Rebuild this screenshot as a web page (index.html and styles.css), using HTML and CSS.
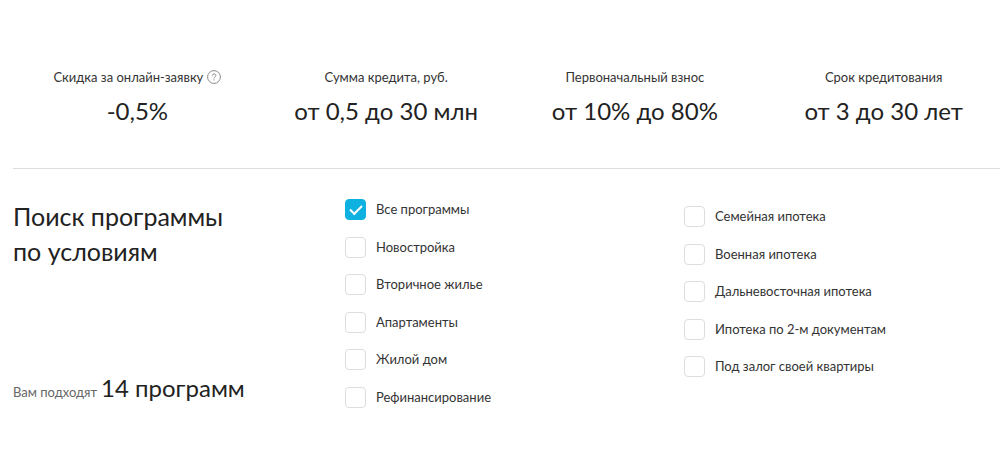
FILE: index.html
```html
<!DOCTYPE html>
<html lang="ru">
<head>
    <meta charset="UTF-8">
    <meta name="viewport" content="width=device-width, initial-scale=1.0">
    <title>Ипотечные программы</title>
    <link rel="stylesheet" href="styles.css">
</head>
<body>
    <!-- Loan terms -->
    <section class="terms">
        <div class="term">
            <div class="term-label">Скидка за онлайн-заявку
                <button class="help" type="button" aria-label="Подробнее">
                    <svg viewBox="0 0 14 14" width="14" height="14" fill="none" stroke="#8a8a8a">
                        <circle cx="7" cy="7" r="6.4"/>
                        <path d="M5.3 5.6C5.3 3.4 8.9 3.4 8.9 5.5C8.9 6.8 7 6.8 7 8.4M7 9.4V10.5"/>
                    </svg>
                </button>
            </div>
            <div class="term-value">-0,5%</div>
        </div>
        <div class="term">
            <div class="term-label">Сумма кредита, руб.</div>
            <div class="term-value">от 0,5 до 30 млн</div>
        </div>
        <div class="term">
            <div class="term-label">Первоначальный взнос</div>
            <div class="term-value">от 10% до 80%</div>
        </div>
        <div class="term">
            <div class="term-label">Срок кредитования</div>
            <div class="term-value">от 3 до 30 лет</div>
        </div>
    </section>

    <!-- Program search -->
    <section class="search">
        <div class="search-info">
            <h2 class="search-title">Поиск программы<br>по условиям</h2>
            <p class="result">Вам подходят <span class="result-count">14 программ</span></p>
        </div>
        <div class="options">
            <label class="option"><input type="checkbox" checked>Все программы</label>
            <label class="option"><input type="checkbox">Новостройка</label>
            <label class="option"><input type="checkbox">Вторичное жилье</label>
            <label class="option"><input type="checkbox">Апартаменты</label>
            <label class="option"><input type="checkbox">Жилой дом</label>
            <label class="option"><input type="checkbox">Рефинансирование</label>
        </div>
        <div class="options options-special">
            <label class="option"><input type="checkbox">Семейная ипотека</label>
            <label class="option"><input type="checkbox">Военная ипотека</label>
            <label class="option"><input type="checkbox">Дальневосточная ипотека</label>
            <label class="option"><input type="checkbox">Ипотека по 2-м документам</label>
            <label class="option"><input type="checkbox">Под залог своей квартиры</label>
        </div>
    </section>
</body>
</html>
```
FILE: styles.css
```css
body {
    margin: 0;
    padding: 66px 0 0 13px;
    font-family: Lato, "Noto Sans", sans-serif;
    font-size: 13px;
    color: #333;
    background: #fff;
}

.terms {
    display: grid;
    grid-template-columns: repeat(4, 1fr);
    column-gap: 16px;
    padding: 0 0 40px 8px;
    border-bottom: 1px solid #ddd;
    text-align: center;
}

.term-label {
    display: flex;
    align-items: center;
    justify-content: center;
    gap: 4px;
    line-height: 22px;
}

.term-value,
.result-count {
    font-size: 24px;
    line-height: 34px;
    color: #222;
}

.term-value {
    margin-top: 6px;
}

.help {
    display: flex;
    padding: 0;
    border: none;
    background: none;
    cursor: pointer;
}

.search {
    display: grid;
    grid-template-columns: 332px 339px 1fr;
    padding-top: 30px;
}

.search-info {
    display: flex;
    flex-direction: column;
    gap: 102px;
    padding-bottom: 3px;
}

.search-title {
    margin: 0;
    font-size: 25px;
    font-weight: 400;
    line-height: 35px;
    color: #222;
}

.result {
    display: flex;
    align-items: baseline;
    gap: 4px;
    margin: 0;
    line-height: 22px;
    color: #666;
}

.options {
    display: flex;
    flex-direction: column;
    justify-content: space-between;
}

.options-special {
    padding: 7px 0 31px;
}

.option {
    display: flex;
    align-items: center;
    gap: 10px;
    line-height: 21px;
    cursor: pointer;
}

.option input {
    appearance: none;
    width: 21px;
    height: 21px;
    margin: 0;
    border: 1px solid #ddd;
    border-radius: 4px;
    background: #fff;
}

.option input:checked {
    display: grid;
    place-items: center;
    border-color: #0eb1e0;
    background: #0eb1e0;
}

.option input:checked::before {
    content: "";
    width: 10px;
    height: 5px;
    border: solid #fff;
    border-width: 0 0 2px 2px;
    margin-bottom: 3px;
    transform: rotate(-45deg);
}
```
